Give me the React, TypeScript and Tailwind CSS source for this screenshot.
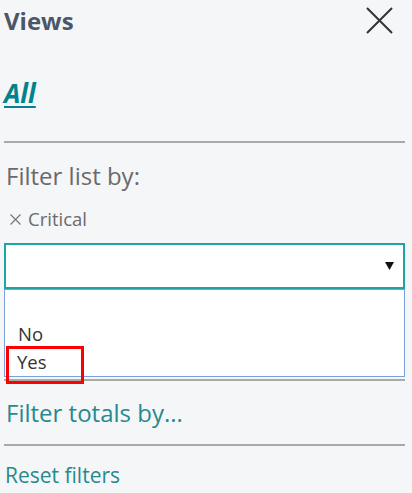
import React from "react";

export default function App() {
  const font = { fontFamily: '"Open Sans", "Noto Sans", sans-serif' };
  return (
    <div
      className="w-[412px] h-[493px] overflow-hidden bg-[#f5f6f8] pl-[4px] pr-[7px]"
      style={font}
    >
      <div className="flex h-[40px] items-start justify-between">
        <div className="mt-[5px] text-[24px] leading-[32px] font-bold text-[#4c5669]">Views</div>
        <svg className="mt-[7px] mr-[12px]" width="27" height="27" viewBox="0 0 27 27">
          <path d="M1 1 L26 26 M26 1 L1 26" stroke="#333" strokeWidth="2" fill="none" />
        </svg>
      </div>
      <div className="mt-[37px] text-[26px] leading-[32px] font-bold italic text-[#00838a] underline decoration-2 underline-offset-[3px]">
        All
      </div>
      <div className="mt-[32px] h-[2px] bg-[#a9a9a9]" />
      <div className="mt-[17px] pl-[2px] text-[24px] leading-[32px] text-[#6a6a6a]">Filter list by:</div>
      <div className="mt-[15px] flex items-center text-[18.5px] leading-[24px] text-[#6a6a6a]">
        <svg className="ml-[6px] mr-[7px]" width="11" height="11" viewBox="0 0 11 11">
          <path d="M0.5 0.5 L10.5 10.5 M10.5 0.5 L0.5 10.5" stroke="#777" strokeWidth="1.2" fill="none" />
        </svg>
        <span>Critical</span>
      </div>
      <div className="mt-[12px] h-[46px] border-2 border-[#1ea3a6] bg-white flex items-center justify-end pr-[9px]">
        <svg width="9" height="8" viewBox="0 0 9 8">
          <path d="M0 0 L9 0 L4.5 8 Z" fill="#111" />
        </svg>
      </div>
      <div className="relative h-[88px] border border-[#7ba0dc] bg-white pt-[2px] text-[18.5px] leading-[28px] text-[#333]">
        <div className="h-[28px] pl-[13px]" />
        <div className="h-[28px] pl-[13px]">No</div>
        <div className="h-[28px] pl-[12px]">Yes</div>
        <div className="absolute left-[1px] top-[56px] w-[78px] h-[38px] border-[3px] border-[#ff0000]" />
      </div>
      <div className="mt-[2px] h-[2px] bg-[#a9a9a9]" />
      <div className="mt-[16px] text-[24px] leading-[32px] text-[#27898f] pl-[2px]">Filter totals by...</div>
      <div className="mt-[15px] h-[2px] bg-[#a9a9a9]" />
      <div className="mt-[15px] text-[21px] leading-[28px] text-[#27898f] pl-[1px]">Reset filters</div>
    </div>
  );
}
